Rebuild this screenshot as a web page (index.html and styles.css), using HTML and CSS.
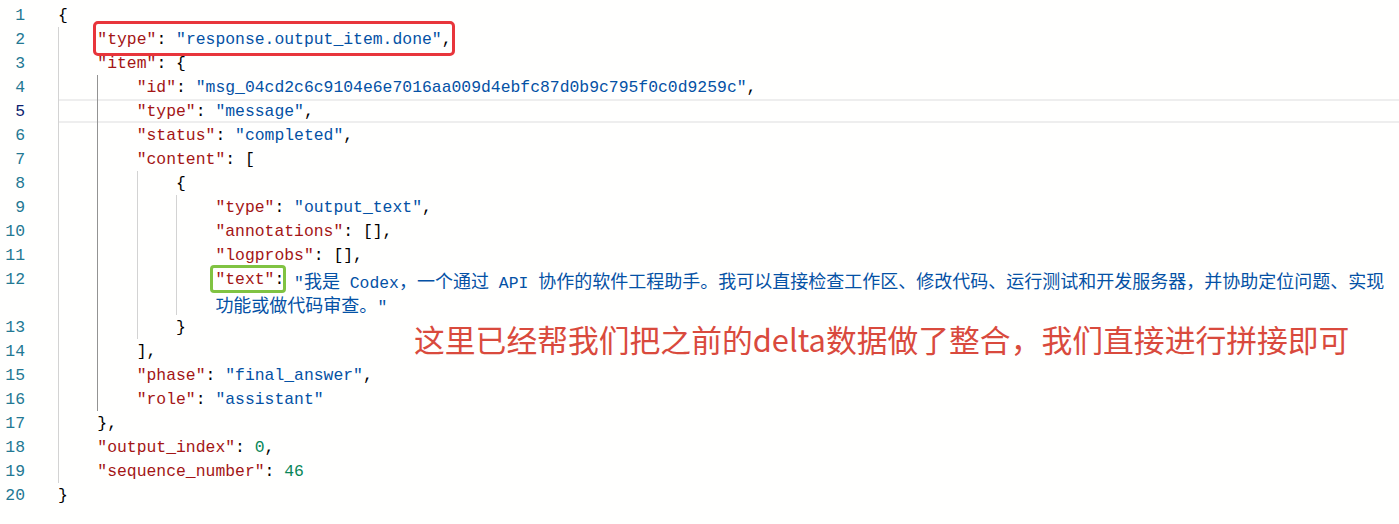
FILE: index.html
```html
<!DOCTYPE html>
<html lang="zh-CN">
<head>
<meta charset="utf-8">
<title>response.output_item.done</title>
<link rel="stylesheet" href="styles.css">
</head>
<body>
<div class="editor">
  <div class="row"><span class="ln">1</span><div class="code"><span class="tx">{</span></div></div>
  <div class="row"><span class="ln">2</span><div class="code"><span class="ind"></span><span class="tx"><span class="hl-red"><span class="k">"type"</span>: <span class="s">"response.output_item.done"</span>,</span></span></div></div>
  <div class="row"><span class="ln">3</span><div class="code"><span class="ind"></span><span class="tx"><span class="k">"item"</span>: {</span></div></div>
  <div class="row"><span class="ln">4</span><div class="code"><span class="ind"></span><span class="ind act"></span><span class="tx"><span class="k">"id"</span>: <span class="s">"msg_04cd2c6c9104e6e7016aa009d4ebfc87d0b9c795f0c0d9259c"</span>,</span></div></div>
  <div class="row"><span class="ln cur">5</span><div class="code cur"><span class="ind"></span><span class="ind act"></span><span class="tx"><span class="k">"type"</span>: <span class="s">"message"</span>,</span></div></div>
  <div class="row"><span class="ln">6</span><div class="code"><span class="ind"></span><span class="ind act"></span><span class="tx"><span class="k">"status"</span>: <span class="s">"completed"</span>,</span></div></div>
  <div class="row"><span class="ln">7</span><div class="code"><span class="ind"></span><span class="ind act"></span><span class="tx"><span class="k">"content"</span>: [</span></div></div>
  <div class="row"><span class="ln">8</span><div class="code"><span class="ind"></span><span class="ind act"></span><span class="ind"></span><span class="tx">{</span></div></div>
  <div class="row"><span class="ln">9</span><div class="code"><span class="ind"></span><span class="ind act"></span><span class="ind"></span><span class="ind"></span><span class="tx"><span class="k">"type"</span>: <span class="s">"output_text"</span>,</span></div></div>
  <div class="row"><span class="ln">10</span><div class="code"><span class="ind"></span><span class="ind act"></span><span class="ind"></span><span class="ind"></span><span class="tx"><span class="k">"annotations"</span>: [],</span></div></div>
  <div class="row"><span class="ln">11</span><div class="code"><span class="ind"></span><span class="ind act"></span><span class="ind"></span><span class="ind"></span><span class="tx"><span class="k">"logprobs"</span>: [],</span></div></div>
  <div class="row"><span class="ln">12</span><div class="code"><span class="ind"></span><span class="ind act"></span><span class="ind"></span><span class="ind"></span><span class="tx"><span class="hl-green"><span class="k">"text"</span>:</span> <span class="s">"<span class="cjk">我是</span> Codex<span class="cjk">，一个通过</span> API <span class="cjk">协作的软件工程助手。我可以直接检查工作区、修改代码、运行测试和开发服务器，并协助定位问题、实现</span></span></span></div></div>
  <div class="row"><span class="ln"></span><div class="code"><span class="ind"></span><span class="ind act"></span><span class="ind"></span><span class="ind"></span><span class="tx"><span class="s"><span class="cjk">功能或做代码审查。</span>"</span></span></div></div>
  <div class="row"><span class="ln">13</span><div class="code"><span class="ind"></span><span class="ind act"></span><span class="ind"></span><span class="tx">}</span></div></div>
  <div class="row"><span class="ln">14</span><div class="code"><span class="ind"></span><span class="ind act"></span><span class="tx">],</span></div></div>
  <div class="row"><span class="ln">15</span><div class="code"><span class="ind"></span><span class="ind act"></span><span class="tx"><span class="k">"phase"</span>: <span class="s">"final_answer"</span>,</span></div></div>
  <div class="row"><span class="ln">16</span><div class="code"><span class="ind"></span><span class="ind act"></span><span class="tx"><span class="k">"role"</span>: <span class="s">"assistant"</span></span></div></div>
  <div class="row"><span class="ln">17</span><div class="code"><span class="ind"></span><span class="tx">},</span></div></div>
  <div class="row"><span class="ln">18</span><div class="code"><span class="ind"></span><span class="tx"><span class="k">"output_index"</span>: <span class="n">0</span>,</span></div></div>
  <div class="row"><span class="ln">19</span><div class="code"><span class="ind"></span><span class="tx"><span class="k">"sequence_number"</span>: <span class="n">46</span></span></div></div>
  <div class="row"><span class="ln">20</span><div class="code"><span class="tx">}</span></div></div>

  <div class="note">这里已经帮我们把之前的delta数据做了整合，我们直接进行拼接即可</div>
</div>
</body>
</html>
```

FILE: styles.css
```css
html, body {
  margin: 0;
  padding: 0;
  background: #fffffe;
}

.editor {
  position: relative;
  padding-top: 3px;
  font-family: "Liberation Mono", "DejaVu Sans Mono", monospace;
  font-size: 16.4px;
  line-height: 24px;
  color: #000000;
}

.row {
  display: flex;
  height: 24px;
}

.ln {
  flex: none;
  width: 25px;
  padding-top: 1px;
  padding-right: 33px;
  text-align: right;
  color: #237893;
}

.ln.cur {
  color: #0b216f;
}

.code {
  flex: 1;
  display: flex;
  min-width: 0;
}

.code.cur {
  box-shadow: inset 0 2px #eeeeee, inset 0 -2px #eeeeee;
}

.ind {
  flex: none;
  width: 4ch;
  box-shadow: inset 1px 0 #d3d3d3;
}

.ind.act {
  box-shadow: inset 1px 0 #939393;
}

.tx {
  white-space: pre;
  padding-top: 1px;
}

.k { color: #a31515; }
.s { color: #0451a5; }
.n { color: #098658; }

.cjk {
  font-family: "Noto Sans CJK SC", sans-serif;
  font-size: 18px;
}

.hl-red,
.hl-green {
  display: inline-block;
  position: relative;
  height: 24px;
  vertical-align: top;
}

.hl-red::after {
  content: "";
  position: absolute;
  left: -4.5px;
  right: -3.5px;
  top: -7px;
  bottom: -4px;
  border: 3px solid #e8353b;
  border-radius: 5px;
}

.hl-green::after {
  content: "";
  position: absolute;
  left: -5px;
  right: -1.5px;
  top: -3px;
  bottom: -1px;
  border: 3px solid #80c342;
  border-radius: 4px;
}

.note {
  position: absolute;
  left: 414px;
  top: 319px;
  font-family: "Noto Sans CJK SC", sans-serif;
  font-size: 30.8px;
  line-height: 40px;
  color: #d94a3d;
  white-space: nowrap;
}
```
